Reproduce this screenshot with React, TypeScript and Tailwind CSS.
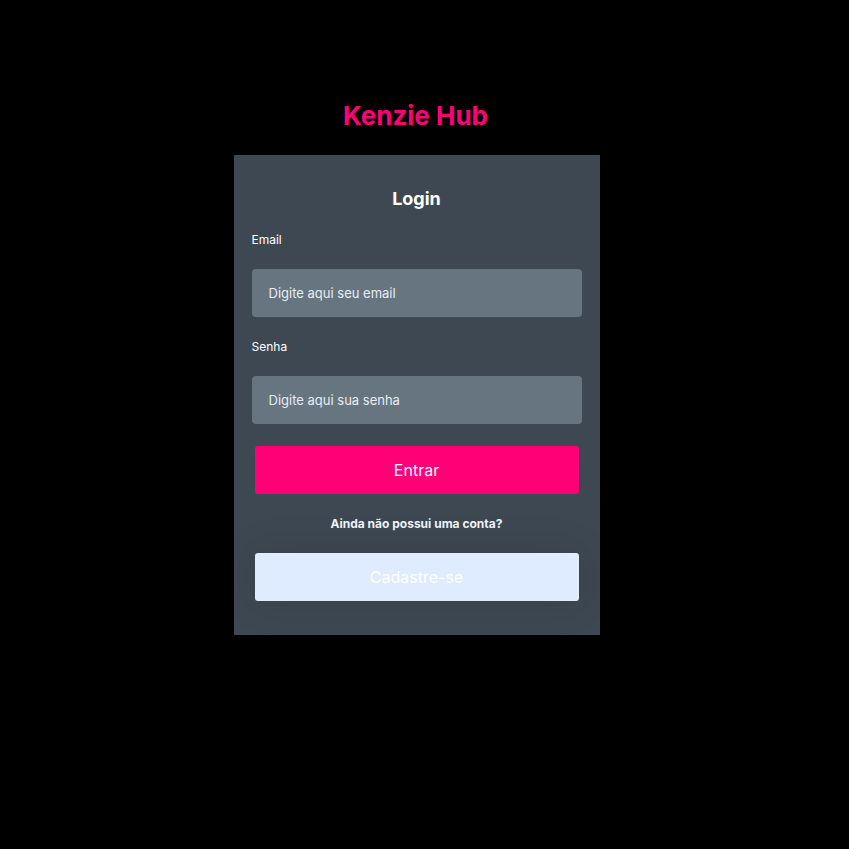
export default function App() {
  return (
    <div
      className="min-h-[849px] w-full bg-black flex flex-col items-center pr-[16px]"
      style={{ fontFamily: "Inter, 'Noto Sans', sans-serif" }}
    >
      <h1 className="mt-[100px] text-[26px] leading-[32px] font-bold text-[#ff0077] -translate-x-[1px]">
        Kenzie Hub
      </h1>
      <form
        className="mt-[23px] w-[366px] h-[480px] bg-[#3e4852] flex flex-col px-[18px]"
        onSubmit={(e) => e.preventDefault()}
      >
        <h2 className="mt-[33px] text-center text-[18px] leading-[22px] font-bold text-white">
          Login
        </h2>
        <label className="mt-[22px] text-[12px] leading-[15px] text-white">Email</label>
        <input
          type="email"
          placeholder="Digite aqui seu email"
          className="mt-[22px] h-[48px] w-full rounded-[4px] bg-[#677581] px-[17px] text-[13px] text-white placeholder:text-[#e6ecf5] outline-none"
        />
        <label className="mt-[22px] text-[12px] leading-[15px] text-white">Senha</label>
        <input
          type="password"
          placeholder="Digite aqui sua senha"
          className="mt-[22px] h-[48px] w-full rounded-[4px] bg-[#677581] px-[17px] text-[13px] text-white placeholder:text-[#e6ecf5] outline-none"
        />
        <button
          type="submit"
          className="mt-[22px] mx-auto h-[48px] w-[324px] rounded-[3px] bg-[#ff0077] text-[16px] text-white"
        >
          Entrar
        </button>
        <p className="mt-[22px] text-center text-[12px] leading-[15px] font-bold text-[#f0f4fa]">
          Ainda não possui uma conta?
        </p>
        <button
          type="button"
          className="mt-[22px] mx-auto h-[48px] w-[324px] rounded-[3px] bg-[#dfebfe] text-[16px] text-white shadow-[0_0_40px_rgba(0,0,0,0.12)]"
        >
          Cadastre-se
        </button>
      </form>
    </div>
  );
}
